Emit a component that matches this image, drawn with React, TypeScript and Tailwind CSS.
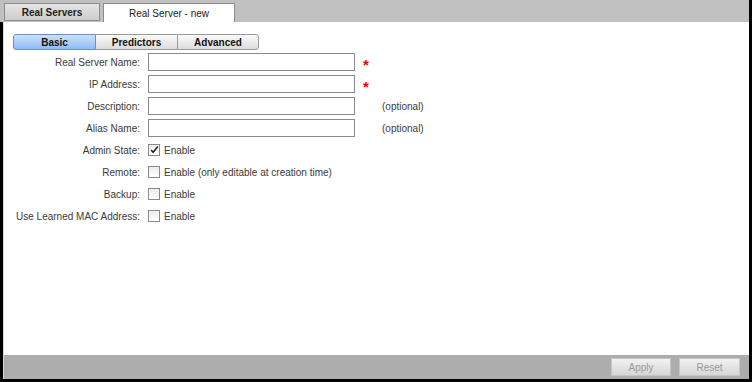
const fields = [
  { label: "Real Server Name:", required: true },
  { label: "IP Address:", required: true },
  { label: "Description:", optional: true },
  { label: "Alias Name:", optional: true },
];

const checks = [
  { label: "Admin State:", checked: true, text: "Enable" },
  { label: "Remote:", checked: false, text: "Enable (only editable at creation time)" },
  { label: "Backup:", checked: false, text: "Enable" },
  { label: "Use Learned MAC Address:", checked: false, text: "Enable" },
];

const Checkbox = ({ checked }: { checked: boolean }) => (
  <span className="w-[12px] h-[12px] border border-[#8a8a8a] bg-gradient-to-b from-[#ececec] to-[#ffffff] flex items-center justify-center shrink-0">
    {checked && (
      <svg viewBox="0 0 12 12" className="w-[12px] h-[12px]" aria-hidden="true">
        <path d="M2.5 6 L5 8.8 L10.5 1.8" fill="none" stroke="#222" strokeWidth="1.8" />
      </svg>
    )}
  </span>
);

export default function App() {
  return (
    <div
      className="w-[752px] h-[382px] bg-black flex flex-col text-[10px] text-[#3a3a3a] whitespace-nowrap"
      style={{ fontFamily: '"Liberation Sans", Arial, sans-serif' }}
    >
      {/* tab strip */}
      <div className="h-[22px] mr-[3px] bg-[#c0c0c0] flex items-end pl-[4px] gap-[3px]">
        <div className="h-[18px] mb-[1px] w-[96px] border border-[#8c8c8c] bg-gradient-to-b from-[#e4e4e4] to-[#cdcdcd] flex items-center justify-center font-bold text-[#222]">
          Real Servers
        </div>
        <div className="h-[19px] w-[132px] border border-b-0 border-[#8c8c8c] bg-white flex items-center justify-center text-[#222]">
          Real Server - new
        </div>
      </div>

      {/* content */}
      <div className="flex-1 ml-[3px] mr-[3px] bg-white border-l border-[#d8d8d8] flex flex-col">
        <div className="flex ml-[9px] mt-[12px] h-[16px] w-[246px]">
          <div className="w-[83px] border border-[#6d8fbf] rounded-l-[3px] bg-gradient-to-b from-[#c9e0ff] to-[#8fbcf5] flex items-center justify-center font-bold text-[#111]">
            Basic
          </div>
          <div className="w-[81px] border-y border-[#9a9a9a] bg-gradient-to-b from-[#fbfbfb] to-[#dcdcdc] flex items-center justify-center font-bold text-[#111]">
            Predictors
          </div>
          <div className="w-[82px] border border-[#9a9a9a] rounded-r-[3px] bg-gradient-to-b from-[#fbfbfb] to-[#dcdcdc] flex items-center justify-center font-bold text-[#111]">
            Advanced
          </div>
        </div>

        <div className="flex flex-col gap-[4px] mt-[3px]">
          {fields.map((f) => (
            <div key={f.label} className="flex items-center h-[18px]">
              <div className="w-[136px] text-right">{f.label}</div>
              <div className="ml-[8px] w-[207px] h-[18px] border border-[#8a8a8a] bg-white" />
              {f.required && <span className="ml-[8px] text-[#e00] text-[15px] font-bold leading-none mt-[4px]">*</span>}
              {f.optional && <span className="ml-[27px]">(optional)</span>}
            </div>
          ))}
          {checks.map((c) => (
            <div key={c.label} className="flex items-center h-[18px]">
              <div className="w-[136px] text-right">{c.label}</div>
              <div className="ml-[8px] flex items-center gap-[4px]">
                <Checkbox checked={c.checked} />
                <span>{c.text}</span>
              </div>
            </div>
          ))}
        </div>
      </div>

      {/* footer */}
      <div className="h-[24px] ml-[3px] mr-[3px] mb-[3px] bg-[#adadad] border-l border-[#d8d8d8] flex items-center justify-end gap-[8px] pr-[9px]">
        <div className="w-[60px] h-[18px] border border-[#c6c6c6] bg-gradient-to-b from-[#f2f2f2] to-[#d6d6d6] flex items-center justify-center text-[#9a9a9a]">
          Apply
        </div>
        <div className="w-[61px] h-[18px] border border-[#c6c6c6] bg-gradient-to-b from-[#f2f2f2] to-[#d6d6d6] flex items-center justify-center text-[#9a9a9a]">
          Reset
        </div>
      </div>
    </div>
  );
}
